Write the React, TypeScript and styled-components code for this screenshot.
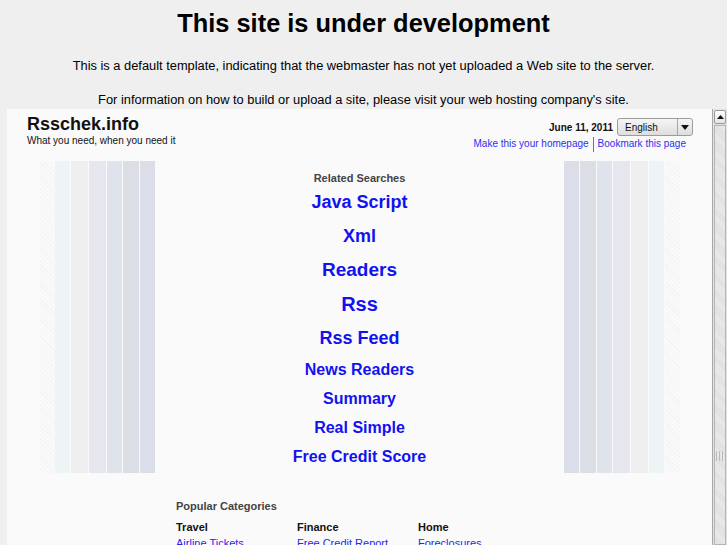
import styled, { createGlobalStyle } from 'styled-components';

const GlobalStyle = createGlobalStyle`
	html, body {
		margin: 0;
		padding: 0;
		background: #efefef;
		font-family: 'Liberation Sans', Arial, sans-serif;
		overflow: hidden;
	}
`;

const Page = styled.div`
	width: 727px;
	height: 545px;
	display: flex;
	flex-direction: column;
	overflow: hidden;
`;

const Intro = styled.div`
	text-align: center;
	color: #000;
	padding-top: 8px;
`;

const Title = styled.h1`
	margin: 0;
	font-size: 25.4px;
	line-height: 30px;
	font-weight: bold;
`;

const Note = styled.p<{ $top: number }>`
	margin: 0;
	font-size: 12.85px;
	line-height: 16px;
	margin-top: ${(p) => p.$top}px;
`;

const Frame = styled.div`
	margin: 1px 0 0 7px;
	flex: 1;
	display: flex;
	min-height: 0;
`;

const FrameBody = styled.div`
	flex: 1;
	background: #fafafa;
	overflow: hidden;
`;

const Scrollbar = styled.div`
	width: 15px;
	display: flex;
	flex-direction: column;
	background: #e2e2e2;
	border-left: 1px solid #a8a8a8;
	box-sizing: border-box;
`;

const ScrollButton = styled.div`
	height: 14px;
	margin: 1px;
	border: 1px solid #9a9a9a;
	border-radius: 2px;
	background: linear-gradient(#fdfdfd, #e4e4e4);
	display: flex;
	align-items: center;
	justify-content: center;
	box-sizing: border-box;
`;

const Thumb = styled.div`
	flex: 1;
	margin: 0 1px;
	border: 1px solid #b5b5b5;
	background: repeating-linear-gradient(45deg, #dedede 0 1px, #ececec 1px 2px);
	display: flex;
	flex-direction: column;
	justify-content: flex-end;
	align-items: center;
	padding-bottom: 83px;
`;

const Grip = styled.div`
	width: 9px;
	height: 10px;
	background: repeating-linear-gradient(90deg, #bbb 0 1px, transparent 1px 3px);
`;

const Header = styled.div`
	display: flex;
	justify-content: space-between;
	padding: 4px 19px 0 20px;
`;

const Brand = styled.div`
	display: flex;
	flex-direction: column;
	padding-top: 1px;
`;

const BrandName = styled.div`
	font-size: 18px;
	font-weight: bold;
	line-height: 20px;
	color: #111;
`;

const Tagline = styled.div`
	font-size: 10px;
	line-height: 14px;
	color: #111;
`;

const Tools = styled.div`
	display: flex;
	flex-direction: column;
	align-items: flex-end;
	padding-top: 5px;
`;

const DateRow = styled.div`
	display: flex;
	align-items: center;
	gap: 4px;
`;

const DateText = styled.span`
	font-size: 10px;
	font-weight: bold;
	color: #111;
`;

const Select = styled.div`
	width: 76px;
	height: 18px;
	box-sizing: border-box;
	border: 1px solid #9c9c9c;
	border-radius: 3px;
	background: linear-gradient(#f6f6f6, #dedede);
	display: flex;
	align-items: center;
	font-size: 10px;
	color: #111;
`;

const SelectLabel = styled.span`
	flex: 1;
	padding-left: 7px;
`;

const SelectArrow = styled.span`
	width: 14px;
	height: 100%;
	border-left: 1px solid #a6a6a6;
	display: flex;
	align-items: center;
	justify-content: center;
`;

const TopLinks = styled.div`
	display: flex;
	align-items: center;
	margin-right: 7px;
	font-size: 10px;
	line-height: 16px;
`;

const TopLink = styled.a`
	color: #2f2fee;
	text-decoration: none;
`;

const Divider = styled.span`
	width: 1px;
	height: 15px;
	background: #777;
	margin: 0 4px;
`;

const Stripes = styled.div`
	display: flex;
	margin: 9px 32px 0 33px;
	height: 312px;
`;

const Stripe = styled.div<{ $color: string; $w: number }>`
	width: ${(p) => p.$w}px;
	margin-right: 1px;
	background: ${(p) => p.$color};
`;

const Fade = styled.div`
	width: 15px;
	background: repeating-linear-gradient(45deg, #f4f4f4 0 1px, #fafafa 1px 3px);
`;

const Center = styled.div`
	flex: 1;
	display: flex;
	flex-direction: column;
	align-items: center;
	padding-top: 10px;
	margin-right: 1px;
`;

const Label = styled.div`
	font-size: 11px;
	font-weight: bold;
	line-height: 14px;
	color: #444;
`;

const SearchLink = styled.a<{ $size: number }>`
	display: block;
	font-size: ${(p) => p.$size}px;
	line-height: ${(p) => (p.$size > 16 ? 34 : 29)}px;
	font-weight: bold;
	color: #1212f0;
	text-decoration: none;
`;

const Categories = styled.div`
	padding: 26px 0 0 169px;
`;

const CatGrid = styled.div`
	display: grid;
	grid-template-columns: repeat(3, 121px);
	margin-top: 7px;
`;

const CatHead = styled.div`
	font-size: 11px;
	font-weight: bold;
	line-height: 14px;
	color: #111;
`;

const CatLink = styled.a`
	display: block;
	font-size: 11px;
	line-height: 14px;
	margin-top: 2px;
	color: #2727ee;
	text-decoration: underline;
`;

const stripes = ['#eef4f6', '#efefef', '#e6e6ee', '#dfe4ec', '#dcdee6', '#dbdde8'];
const widths = [15, 17, 17, 15, 16, 15];

const searches: [string, number][] = [
	['Java Script', 18],
	['Xml', 18],
	['Readers', 19],
	['Rss', 20],
	['Rss Feed', 18],
	['News Readers', 16],
	['Summary', 16],
	['Real Simple', 16],
	['Free Credit Score', 16],
];

const categories = [
	['Travel', 'Airline Tickets'],
	['Finance', 'Free Credit Report'],
	['Home', 'Foreclosures'],
];

function App() {
	return (
		<Page>
			<GlobalStyle />
			<Intro>
				<Title>This site is under development</Title>
				<Note $top={20}>
					This is a default template, indicating that the webmaster has not yet uploaded a Web site to the server.
				</Note>
				<Note $top={18}>For information on how to build or upload a site, please visit your web hosting company's site.</Note>
			</Intro>
			<Frame>
				<FrameBody>
					<Header>
						<Brand>
							<BrandName>Rsschek.info</BrandName>
							<Tagline>What you need, when you need it</Tagline>
						</Brand>
						<Tools>
							<DateRow>
								<DateText>June 11, 2011</DateText>
								<Select>
									<SelectLabel>English</SelectLabel>
									<SelectArrow>
										<svg width="8" height="5" viewBox="0 0 8 5">
											<path d="M0 0h8L4 5z" fill="#111" />
										</svg>
									</SelectArrow>
								</Select>
							</DateRow>
							<TopLinks>
								<TopLink href="#">Make this your homepage</TopLink>
								<Divider />
								<TopLink href="#">Bookmark this page</TopLink>
							</TopLinks>
						</Tools>
					</Header>
					<Stripes>
						<Fade />
						{stripes.map((c, i) => (
							<Stripe key={'l' + i} $color={c} $w={widths[i]} />
						))}
						<Center>
							<Label>Related Searches</Label>
							{searches.map(([t, s]) => (
								<SearchLink key={t} href="#" $size={s}>
									{t}
								</SearchLink>
							))}
						</Center>
						{stripes
							.slice()
							.reverse()
							.map((c, i) => (
								<Stripe key={'r' + i} $color={c} $w={widths[5 - i]} />
							))}
						<Fade />
					</Stripes>
					<Categories>
						<Label>Popular Categories</Label>
						<CatGrid>
							{categories.map(([h, l]) => (
								<div key={h}>
									<CatHead>{h}</CatHead>
									<CatLink href="#">{l}</CatLink>
								</div>
							))}
						</CatGrid>
					</Categories>
				</FrameBody>
				<Scrollbar>
					<ScrollButton>
						<svg width="7" height="4" viewBox="0 0 7 4">
							<path d="M0 4h7L3.5 0z" fill="#111" />
						</svg>
					</ScrollButton>
					<Thumb>
						<Grip />
					</Thumb>
				</Scrollbar>
			</Frame>
		</Page>
	);
}

export default App;
